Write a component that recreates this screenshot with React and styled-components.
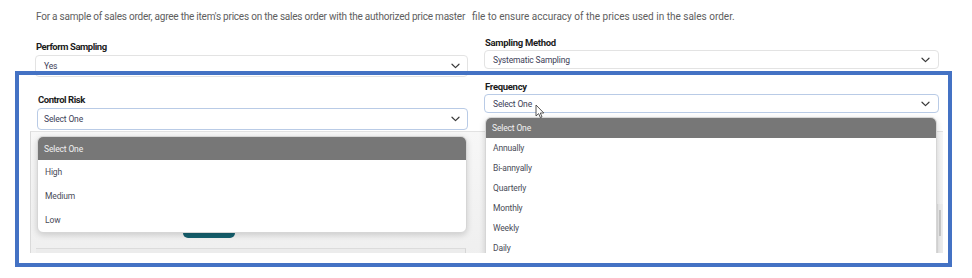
import React from "react";
import styled, { createGlobalStyle } from "styled-components";

const GlobalStyle = createGlobalStyle`
  html, body { margin: 0; padding: 0; background: #fff; }
  body { font-family: Roboto, "Open Sans", Arial, sans-serif; }
  * { box-sizing: border-box; }
`;

const Page = styled.div`
  position: relative;
  width: 972px;
  height: 278px;
  overflow: hidden;
  background: #fff;
`;

const Viewport = styled.div`
  position: relative;
  height: 253px;
  overflow: hidden;
`;

const Intro = styled.p`
  margin: 0;
  padding: 9px 0 0 36px;
  font-size: 10px;
  line-height: 16px;
  color: #5e5e5e;
  letter-spacing: -0.22px;
  white-space: nowrap;
`;

const IntroTail = styled.span`
  font-size: 10px;
  letter-spacing: 0;
  margin-left: 7px;
`;

const Columns = styled.div`
  position: relative;
  z-index: 2;
  display: grid;
  grid-template-columns: 433px 455px;
  column-gap: 16px;
  align-items: start;
  padding-left: 35px;
  margin-top: 12px;
`;

const Column = styled.div`
  display: flex;
  flex-direction: column;
  gap: ${(p) => p.$gap}px;
  padding-top: ${(p) => p.$offset || 0}px;
`;

const Field = styled.div`
  position: relative;
  display: flex;
  flex-direction: column;
  gap: ${(p) => (p.$compact ? 1 : 2)}px;
  margin-left: ${(p) => p.$indent || 0}px;
`;

const Label = styled.div`
  padding-left: 1px;
  font-size: 9.5px;
  line-height: 12px;
  font-weight: 700;
  color: #1c1c1c;
  letter-spacing: ${(p) => (p.$tight ? -0.45 : -0.3)}px;
`;

const Select = styled.div`
  height: ${(p) => (p.$compact ? 19 : 22)}px;
  display: flex;
  align-items: center;
  justify-content: space-between;
  padding: 0 ${(p) => p.$padRight}px 0 ${(p) => p.$padLeft}px;
  border: 1px solid ${(p) => (p.$focus ? "#b9cbe6" : "#e3e3e3")};
  border-radius: 4px;
  background: #fff;
  font-size: 8.5px;
  color: #3d4058;
  letter-spacing: -0.15px;
`;

const Chevron = () => (
  <svg width="9" height="6" viewBox="0 0 9 6" fill="none">
    <path d="M1 1.2 L4.5 4.6 L8 1.2" stroke="#3a3a3a" strokeWidth="1.2" strokeLinecap="round" strokeLinejoin="round" />
  </svg>
);

const Menu = styled.ul`
  position: absolute;
  z-index: 5;
  left: ${(p) => p.$left}px;
  right: ${(p) => p.$right}px;
  top: calc(100% + ${(p) => p.$top}px);
  margin: 0;
  padding: 0;
  list-style: none;
  background: #fff;
  border: 1px solid #d6d6d6;
  border-radius: 6px;
  box-shadow: 0 2px 6px rgba(0, 0, 0, 0.16);
  overflow: hidden;
`;

const MenuHeader = styled.li`
  height: ${(p) => p.$h}px;
  display: flex;
  align-items: center;
  padding-left: 6px;
  background: #777777;
  color: #f1f1f1;
  font-size: 8.5px;
  letter-spacing: -0.15px;
`;

const MenuItem = styled.li`
  height: ${(p) => p.$h}px;
  display: flex;
  align-items: center;
  padding-left: 7px;
  color: #4a4c58;
  font-size: 8.5px;
  letter-spacing: -0.15px;
`;

const Backdrop = styled.div`
  position: relative;
  z-index: 1;
  margin: 1px 0 0 30px;
  width: 913px;
  height: 130px;
  background: linear-gradient(#f7f7f7, #efefef);
  border-left: 1px solid #dadada;
  border-top: 1px solid #e2e2e2;
  display: flex;
  flex-direction: column;
`;

const TealButton = styled.div`
  margin: 88px 0 0 152px;
  width: 52px;
  height: 18px;
  border-radius: 0 0 5px 5px;
  background: #15606e;
`;

const TableRow = styled.div`
  margin: 10px 0 0 5px;
  width: 430px;
  height: 8px;
  background: #ececec;
  border-top: 1px solid #dcdcdc;
  border-right: 1px solid #d6d6d6;
`;

const Scrollbar = styled.div`
  position: absolute;
  right: 0;
  top: 72px;
  width: 6px;
  bottom: 0;
  background: #ededed;
  border-left: 1px solid #e0e0e0;
  &::after {
    content: "";
    position: absolute;
    left: 1px;
    top: 6px;
    width: 2px;
    height: 26px;
    background: #c9c9c9;
  }
`;

const Highlight = styled.div`
  position: absolute;
  z-index: 10;
  left: 15px;
  top: 71px;
  width: 937px;
  height: 196px;
  border: 4px solid #4472c4;
  pointer-events: none;
`;

const Cursor = styled.svg`
  position: absolute;
  z-index: 11;
  left: 535px;
  top: 104px;
`;

const riskOptions = ["High", "Medium", "Low"];
const frequencyOptions = ["Annually", "Bi-annyally", "Quarterly", "Monthly", "Weekly", "Daily"];

export default function App() {
  return (
    <>
      <GlobalStyle />
      <Page>
        <Viewport>
          <Intro>
            For a sample of sales order, agree the item's prices on the sales order with the authorized price master
            <IntroTail>file to ensure accuracy of the prices used in the sales order.</IntroTail>
          </Intro>
          <Columns>
            <Column $gap={17} $offset={4}>
              <Field>
                <Label $tight>Perform Sampling</Label>
                <Select $padLeft={8} $padRight={7}>
                  <span>Yes</span>
                  <Chevron />
                </Select>
              </Field>
              <Field $indent={2}>
                <Label $tight>Control Risk</Label>
                <Select $focus $padLeft={6} $padRight={7}>
                  <span>Select One</span>
                  <Chevron />
                </Select>
                <Menu $left={0} $right={1} $top={6}>
                  <MenuHeader $h={23}>Select One</MenuHeader>
                  {riskOptions.map((o) => (
                    <MenuItem key={o} $h={24}>{o}</MenuItem>
                  ))}
                </Menu>
              </Field>
            </Column>
            <Column $gap={12}>
              <Field $compact>
                <Label>Sampling Method</Label>
                <Select $compact $padLeft={8} $padRight={8}>
                  <span>Systematic Sampling</span>
                  <Chevron />
                </Select>
              </Field>
              <Field $compact>
                <Label>Frequency</Label>
                <Select $compact $focus $padLeft={8} $padRight={8}>
                  <span>Select One</span>
                  <Chevron />
                </Select>
                <Menu $left={1} $right={2} $top={4}>
                  <MenuHeader $h={20}>Select One</MenuHeader>
                  {frequencyOptions.map((o) => (
                    <MenuItem key={o} $h={20}>{o}</MenuItem>
                  ))}
                </Menu>
              </Field>
            </Column>
          </Columns>
          <Backdrop>
            <TealButton />
            <TableRow />
            <Scrollbar />
          </Backdrop>
        </Viewport>
        <Highlight />
        <Cursor width="10" height="15" viewBox="0 0 10 15">
          <path d="M1 1 L1 12 L3.6 9.6 L5.4 13.6 L7 12.9 L5.3 9 L8.8 9 Z" fill="#fff" stroke="#444" strokeWidth="0.9" strokeLinejoin="round" />
        </Cursor>
      </Page>
    </>
  );
}
